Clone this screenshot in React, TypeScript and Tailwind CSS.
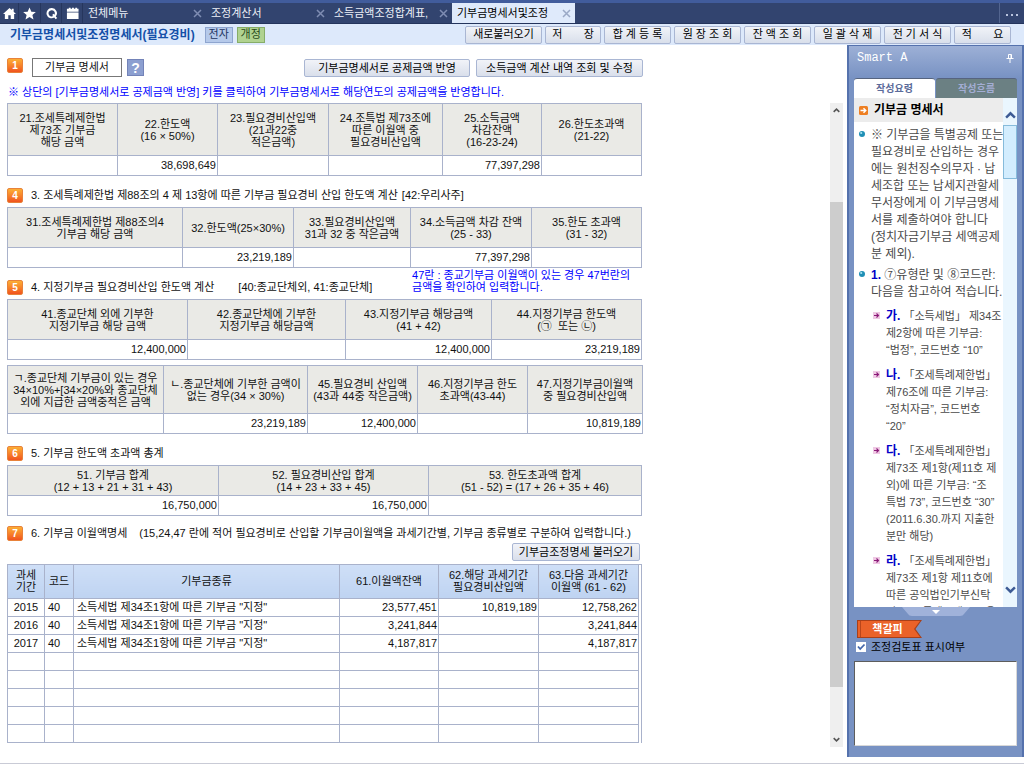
import React from "react";

type Col = { w: string; head: string[]; value?: string };

const limitCols: Col[] = [
  { w: "w-[110px]", head: ["21.조세특례제한법", "제73조 기부금", "해당 금액"] },
  { w: "w-[100px]", head: ["22.한도액", "(16 × 50%)"], value: "38,698,649" },
  { w: "w-[111px]", head: ["23.필요경비산입액", "(21과22중", "적은금액)"] },
  { w: "w-[114px]", head: ["24.조특법 제73조에", "따른 이월액 중", "필요경비산입액"] },
  { w: "w-[99px]", head: ["25.소득금액", "차감잔액", "(16-23-24)"], value: "77,397,298" },
  { w: "w-[100px]", head: ["26.한도초과액", "(21-22)"] },
];

const stockCols: Col[] = [
  { w: "w-[175px]", head: ["31.조세특례제한법 제88조의4", "기부금 해당 금액"] },
  { w: "w-[111px]", head: ["32.한도액(25×30%)"], value: "23,219,189" },
  { w: "w-[117px]", head: ["33.필요경비산입액", "31과 32 중 작은금액"] },
  { w: "w-[121px]", head: ["34.소득금액 차감 잔액", "(25 - 33)"], value: "77,397,298" },
  { w: "w-[110px]", head: ["35.한도 초과액", "(31 - 32)"] },
];

const designatedCols: Col[] = [
  { w: "w-[180px]", head: ["41.종교단체 외에 기부한", "지정기부금 해당 금액"], value: "12,400,000" },
  { w: "w-[158px]", head: ["42.종교단체에 기부한", "지정기부금 해당금액"] },
  { w: "w-[146px]", head: ["43.지정기부금 해당금액", "(41 + 42)"], value: "12,400,000" },
  { w: "w-[150px]", head: ["44.지정기부금 한도액", "(㉠  또는 ㉡)"], value: "23,219,189" },
];

const religiousCols: Col[] = [
  { w: "w-[156px]", head: ["ㄱ.종교단체 기부금이 있는 경우", "34×10%+[34×20%와 종교단체", "외에 지급한 금액중적은 금액"] },
  { w: "w-[144px]", head: ["ㄴ.종교단체에 기부한 금액이", "없는 경우(34 × 30%)"], value: "23,219,189" },
  { w: "w-[110px]", head: ["45.필요경비 산입액", "(43과 44중 작은금액)"], value: "12,400,000" },
  { w: "w-[110px]", head: ["46.지정기부금 한도", "초과액(43-44)"] },
  { w: "w-[115px]", head: ["47.지정기부금이월액", "중 필요경비산입액"], value: "10,819,189" },
];

const totalCols: Col[] = [
  { w: "w-[211px]", head: ["51. 기부금 합계", "(12 + 13 + 21 + 31 + 43)"], value: "16,750,000" },
  { w: "w-[210px]", head: ["52. 필요경비산입 합계", "(14 + 23 + 33 + 45)"], value: "16,750,000" },
  { w: "w-[213px]", head: ["53. 한도초과액 합계", "(51 - 52) = (17 + 26 + 35 + 46)"] },
];

const carryCols: Col[] = [
  { w: "w-[37px]", head: ["과세", "기간"] },
  { w: "w-[29px]", head: ["코드"] },
  { w: "w-[266px]", head: ["기부금종류"] },
  { w: "w-[99px]", head: ["61.이월액잔액"] },
  { w: "w-[100px]", head: ["62.해당 과세기간", "필요경비산입액"] },
  { w: "w-[100px]", head: ["63.다음 과세기간", "이월액 (61 - 62)"] },
];

const kind = '소득세법 제34조1항에 따른 기부금 "지정"';
const carryRows: string[][] = [
  ["2015", "40", kind, "23,577,451", "10,819,189", "12,758,262"],
  ["2016", "40", kind, "3,241,844", "", "3,241,844"],
  ["2017", "40", kind, "4,187,817", "", "4,187,817"],
  ["", "", "", "", "", ""],
  ["", "", "", "", "", ""],
  ["", "", "", "", "", ""],
  ["", "", "", "", "", ""],
  ["", "", "", "", "", ""],
];
const carryAlign = ["text-center", "pl-[3px]", "pl-[3px]", "pr-px text-right", "pr-px text-right", "pr-px text-right"];

function Lines({ lines }: { lines: string[] }) {
  return (
    <>
      {lines.map((line, i) => (
        <span key={i} className="block">
          {line}
        </span>
      ))}
    </>
  );
}

function AmountTable({ cols, headHeight }: { cols: Col[]; headHeight: string }) {
  return (
    <table className="w-full table-fixed border-collapse">
      <thead>
        <tr className={headHeight}>
          {cols.map((c, i) => (
            <th key={i} className={`${c.w} border border-[#a9b2cb] bg-[#eaeae6] p-0 text-center align-middle font-normal leading-[12px] whitespace-pre`}>
              <Lines lines={c.head} />
            </th>
          ))}
        </tr>
      </thead>
      <tbody>
        <tr className="h-[20px]">
          {cols.map((c, i) => (
            <td key={i} className="border border-[#a9b2cb] pt-0 pr-px pb-[2px] pl-0 text-right leading-[16px]">
              {c.value}
            </td>
          ))}
        </tr>
      </tbody>
    </table>
  );
}

function Badge({ n }: { n: string }) {
  return (
    <span className="flex h-[15px] w-[16px] shrink-0 items-center justify-center rounded-[2px] border border-[#e8823a] bg-linear-to-b from-[#fbae35] to-[#f0521f] text-[10px] font-bold leading-none text-white">
      {n}
    </span>
  );
}

function Heading({ n, title, note, noteGap, height = "h-[31px]", children }: {
  n: string;
  title: string;
  note?: string;
  noteGap?: string;
  height?: string;
  children?: React.ReactNode;
}) {
  return (
    <div className={`flex items-stretch ${height}`}>
      <h2 className="flex items-center pt-2 whitespace-nowrap">
        <Badge n={n} />
        <span className="ml-2">{title}</span>
        {note && <span className={noteGap}>{note}</span>}
      </h2>
      {children}
    </div>
  );
}

function PushButton({ children, className = "" }: { children: React.ReactNode; className?: string }) {
  return (
    <button
      type="button"
      className={`flex h-[18px] items-center justify-center rounded-[2px] border border-[#a9b6d3] bg-linear-to-b from-[#f1f3f8] to-[#d9dfeb] leading-none whitespace-pre text-black ${className}`}
    >
      {children}
    </button>
  );
}

function CloseMark({ color }: { color: string }) {
  return (
    <svg width="9" height="9" viewBox="0 0 9 9" fill="none" stroke={color} strokeWidth="1.5">
      <path d="M1 1l7 7M8 1l-7 7" />
    </svg>
  );
}

function Chevron({ dir, color, size }: { dir: "up" | "down"; color: string; size: number }) {
  return (
    <svg width={size} height={size} viewBox="0 0 10 10" fill="none" stroke={color} strokeWidth="2.2">
      <path d={dir === "up" ? "M1 7l4-4 4 4" : "M1 3l4 4 4-4"} />
    </svg>
  );
}

const tabs = ["전체메뉴", "조정계산서", "소득금액조정합계표,", "기부금명세서및조정"];

const navIcons = [
  { name: "home", w: "w-[19px]", d: "M7 1L0 7.500h2V13h3.700V9h2.600v4H12V7.500h2L11.500 5V2h-2v1.300z" },
  { name: "star", w: "w-[22px]", d: "M7 .5l2 4.500 4.800.4-3.700 3.200 1.200 4.900L7 10.900 2.700 13.500l1.200-4.900L.2 5.400 5 5z" },
  { name: "find", w: "w-[21px]", d: "M7 1.200a5.500 5.500 0 1 0 3 10.200l1.500 1.800 1.600-1.300-1.500-1.700A5.500 5.500 0 0 0 7 1.200zm0 2.200a3.400 3.400 0 0 1 3.200 4.900L9.200 7.200 7.700 8.500l1.100 1.300A3.400 3.400 0 1 1 7 3.400z" },
  { name: "calendar", w: "w-[21px]", d: "M1 2h2V.7h2V2h1.500V.7h2V2H10V.7h2V2h1.500v3H1zM1 6h12.500v7H1z" },
];

const actions = [
  { label: "새로불러오기", w: "w-[77px]" },
  { label: "저       장", w: "w-[56px]" },
  { label: "합 계 등 록", w: "w-[67px]" },
  { label: "원 장 조 회", w: "w-[67px]" },
  { label: "잔 액 조 회", w: "w-[67px]" },
  { label: "일 괄 삭 제", w: "w-[67px]" },
  { label: "전 기 서 식", w: "w-[67px]" },
  { label: "적       요", w: "w-[57px]" },
];

function Bullet() {
  return (
    <svg width="6" height="6" viewBox="0 0 6 6" className="mt-[4px] shrink-0">
      <circle cx="3" cy="3" r="3" fill="#1f8fb5" />
      <circle cx="2.200" cy="2" r="1.100" fill="#a8e4f2" />
    </svg>
  );
}

function ArrowBullet() {
  return (
    <svg width="7" height="7" viewBox="0 0 7 7" className="mt-[4px] shrink-0">
      <rect width="7" height="7" fill="#efc9e4" />
      <path d="M1 3.500h4M3.500 1.500l2 2-2 2" fill="none" stroke="#8b1a78" strokeWidth="1.100" />
    </svg>
  );
}

const clauses = [
  { mark: "가.", first: "「소득세법」 제34조", rest: ["제2항에 따른 기부금:", "“법정”, 코드번호 “10”"] },
  { mark: "나.", first: "「조세특례제한법」", rest: ["제76조에 따른 기부금:", "“정치자금”, 코드번호", "“20”"] },
  { mark: "다.", first: "「조세특례제한법」", rest: ["제73조 제1항(제11호 제", "외)에 따른 기부금: “조", "특법 73”, 코드번호 “30”", "(2011.6.30.까지 지출한", "분만 해당)"] },
  { mark: "라.", first: "「조세특례제한법」", rest: ["제73조 제1항 제11호에", "따른 공익법인기부신탁", "기부금: 특례금액 “31”을"] },
];

function SidePanel() {
  return (
    <aside className="flex w-[177px] shrink-0 flex-col border-x-2 border-t border-[#5572ad] bg-[#7892c3] px-[5px] pb-[11px]">
      <header className="-mx-[5px] flex h-[32px] items-start justify-between bg-linear-to-b from-[#9db0d6] to-[#7892c3] px-2 pt-1">
        <h2 className="font-['Liberation_Mono',monospace] text-[12px] leading-[16px] text-white">Smart A</h2>
        <svg width="8" height="9" viewBox="0 0 8 9" fill="none" stroke="#fff" className="mt-[4px]">
          <path d="M2.500 4.500v-4h3v4M.5 4.500h7M4 5v4M5 1v3" />
        </svg>
      </header>
      <div role="tablist" className="flex h-[20px] gap-px text-[10px] font-bold">
        <button type="button" role="tab" aria-selected="true" className="flex-1 rounded-t-[3px] border-t border-[#56647f] bg-white leading-none text-[#5b6b9a]">
          작성요령
        </button>
        <button type="button" role="tab" aria-selected="false" className="flex-1 rounded-t-[3px] border-t border-[#56647f] bg-[#6b8083] leading-none text-[#a3add4]">
          작성흐름
        </button>
      </div>
      <div className="flex h-[509px] overflow-hidden bg-white">
        <article className="min-w-0 flex-1 overflow-hidden text-[#4a4a4a]">
          <h3 className="flex h-[24px] items-center gap-[6px] bg-[#ececec] pl-[5px] text-[12px] font-bold text-black">
            <svg width="9" height="9" viewBox="0 0 9 9">
              <rect width="9" height="9" rx="1.500" fill="#ee7f22" />
              <path d="M1.500 4.500h5M4.500 2.200l2.300 2.300-2.300 2.300" fill="none" stroke="#fff" strokeWidth="1.400" />
            </svg>
            기부금 명세서
          </h3>
          <div className="pt-[5px] pl-[5px] leading-[17px] whitespace-nowrap">
            <div className="flex gap-[6px] text-[12px]">
              <Bullet />
              <p>
                <Lines lines={["※ 기부금을 특별공제 또는", "필요경비로 산입하는 경우", "에는 원천징수의무자 · 납", "세조합 또는 납세지관할세", "무서장에게 이 기부금명세", "서를 제출하여야 합니다", "(정치자금기부금 세액공제", "분 제외)."]} />
              </p>
            </div>
            <div className="mt-1 flex gap-[6px] text-[12px]">
              <Bullet />
              <p>
                <span className="block">
                  <b className="text-[#0000c8]">1.</b> ⑦유형란 및 ⑧코드란:
                </span>
                <span className="block">다음을 참고하여 적습니다.</span>
              </p>
            </div>
            <ol className="mt-[7px] space-y-2 pl-[14px] text-[11px]">
              {clauses.map((c) => (
                <li key={c.mark} className="flex gap-[6px]">
                  <ArrowBullet />
                  <p>
                    <span className="block">
                      <b className="text-[12px] text-[#0000c8]">{c.mark}</b> {c.first}
                    </span>
                    <Lines lines={c.rest} />
                  </p>
                </li>
              ))}
            </ol>
          </div>
        </article>
        <div className="flex w-[14px] shrink-0 flex-col items-center bg-[#eaf6fe]">
          <span className="flex h-[27px] items-center pt-[8px]">
            <Chevron dir="up" color="#3d5a94" size={11} />
          </span>
          <span className="h-[54px] w-full border border-[#86bbdb] bg-[#d3edfe]" />
          <span className="flex-1" />
          <span className="flex h-[23px] items-start">
            <Chevron dir="down" color="#3d5a94" size={11} />
          </span>
        </div>
      </div>
      <svg width="68" height="9" viewBox="0 0 68 9" className="self-center">
        <path d="M0 0h68l-6 7q-1 2-4 2H10q-3 0-4-2z" fill="#a0b2da" />
        <path d="M30 3h8l-4 4z" fill="#fff" />
      </svg>
      <button type="button" className="mt-[4px] ml-[3px] grid h-[18px] w-[65px] items-center">
        <svg width="65" height="18" viewBox="0 0 65 18" className="col-start-1 row-start-1">
          <path d="M0 0h65l-6.500 9L65 18H0z" fill="#a8401a" />
          <path d="M1 1h62l-6 8 6 8H1z" fill="#ea6229" />
          <path d="M3.500 1v16" stroke="#b9461b" />
        </svg>
        <span className="col-start-1 row-start-1 pr-1 text-[11px] font-bold leading-none text-white">책갈피</span>
      </button>
      <label className="flex h-[18px] items-center gap-[5px] pl-[2px] leading-none text-black">
        <span className="grid">
          <input type="checkbox" defaultChecked className="peer col-start-1 row-start-1 size-[10px] appearance-none bg-white" />
          <svg width="10" height="10" viewBox="0 0 10 10" className="pointer-events-none invisible col-start-1 row-start-1 peer-checked:visible">
            <path d="M2 4.500l2.200 2.500L8.500 2.500" fill="none" stroke="#4467ab" strokeWidth="1.800" />
          </svg>
        </span>
        조정검토표 표시여부
      </label>
      <textarea aria-label="책갈피" className="mt-[5px] min-h-[85px] w-full flex-1 resize-none border border-t-[#5d5d5d] border-r-[#d8d8d8] border-b-[#d8d8d8] border-l-[#5d5d5d] bg-white" />
    </aside>
  );
}

export default function App() {
  return (
    <div className="flex min-h-screen flex-col bg-white font-['Liberation_Sans','Noto_Sans_CJK_KR',sans-serif] text-[11px] text-[#111]">
      <nav className="flex h-[24px] border-t-[3px] border-b border-t-[#415c9c] border-b-[#24345c] bg-[#32446f]">
        {navIcons.map((icon) => (
          <button key={icon.name} type="button" aria-label={icon.name} className={`flex shrink-0 items-center justify-center border-r border-[#26365d] ${icon.w}`}>
            <svg width="13" height="13" viewBox="0 0 14 14" fill="#fff" fillRule="evenodd">
              <path d={icon.d} />
            </svg>
          </button>
        ))}
        {tabs.map((tab, i) => (
          <a
            key={tab}
            href="#"
            className={`flex w-[123px] shrink items-center justify-between pr-[4px] pl-[5px] whitespace-nowrap ${i === 3 ? "bg-[#dfeafb] text-black" : "text-[#eef1f8]"}`}
          >
            {tab}
            <CloseMark color={i === 3 ? "#9aa9c6" : "#7f8db3"} />
          </a>
        ))}
        <button type="button" aria-label="more" className="ml-auto flex w-[25px] items-center justify-center border-l border-[#53658f]">
          <svg width="12" height="2" viewBox="0 0 12 2" fill="#b9c4de" className="mt-1">
            <path d="M0 0h2v2H0zM5 0h2v2H5zM10 0h2v2h-2z" />
          </svg>
        </button>
      </nav>

      <header className="flex h-[21px] items-center bg-[#dde9fb] pr-[13px] pl-[10px]">
        <h1 className="text-[12px] font-bold leading-none whitespace-nowrap text-[#1450a8]">기부금명세서및조정명세서(필요경비)</h1>
        <span className="ml-[10px] flex h-[16px] w-[28px] items-center justify-center border border-[#8ea5cf] bg-[#b5c9ea] text-[#1d3460]">전자</span>
        <span className="ml-1 flex h-[16px] w-[28px] items-center justify-center border border-[#86ad68] bg-[#b0d290] text-[#27491a]">개정</span>
        <div className="ml-auto flex gap-[3px]">
          {actions.map((a) => (
            <PushButton key={a.label} className={a.w}>
              {a.label}
            </PushButton>
          ))}
        </div>
      </header>

      <div className="flex flex-1">
        <main className="flex min-w-0 flex-1 flex-col pr-[4px] pb-[10px]">
          <div className="max-w-[643px] pl-[7px]">
            <div className="flex h-[39px] items-start pt-[13px]">
              <Badge n="1" />
              <span className="ml-[9px] flex h-[19px] w-[90px] items-center justify-center border border-[#777] bg-white">기부금 명세서</span>
              <button type="button" className="mt-px ml-[5px] flex size-[17px] items-center justify-center border border-[#7383b8] bg-[#8c9fd0] text-[14px] font-bold leading-none text-white">
                ?
              </button>
              <PushButton className="mt-px ml-auto w-[166px]">기부금명세서로 공제금액 반영</PushButton>
              <PushButton className="mt-px ml-[6px] w-[167px]">소득금액 계산 내역 조회 및 수정</PushButton>
            </div>
            <p className="h-[19px] pl-px leading-[17px] text-[#0000ff]">
              ※ 상단의 [기부금명세서로 공제금액 반영] 키를 클릭하여 기부금명세서로 해당연도의 공제금액을 반영합니다.
            </p>
          </div>

          <div className="flex flex-1 justify-between">
            <div className="w-full max-w-[642px] pl-[7px]">
              <AmountTable cols={limitCols} headHeight="h-[52px]" />

              <Heading n="4" title="3. 조세특례제한법 제88조의 4 제 13항에 따른 기부금 필요경비 산입 한도액 계산" note="[42:우리사주]" noteGap="ml-1" />
              <AmountTable cols={stockCols} headHeight="h-[40px]" />

              <Heading n="5" title="4. 지정기부금 필요경비산입 한도액 계산" note="[40:종교단체외, 41:종교단체]" noteGap="ml-6">
                <p className="ml-auto pt-px pr-[12px] leading-[12px] whitespace-nowrap text-[#0000ff]">
                  <Lines lines={["47란 : 종교기부금 이월액이 있는 경우 47번란의", "금액을 확인하여 입력합니다."]} />
                </p>
              </Heading>
              <AmountTable cols={designatedCols} headHeight="h-[40px]" />
              <div className="h-[5px]" />
              <AmountTable cols={religiousCols} headHeight="h-[48px]" />

              <Heading n="6" title="5. 기부금 한도액 초과액 총계" />
              <AmountTable cols={totalCols} headHeight="h-[30px]" />

              <Heading n="7" title="6. 기부금 이월액명세" note="(15,24,47 란에 적어 필요경비로 산입할 기부금이월액을 과세기간별, 기부금 종류별로 구분하여 입력합니다.)" noteGap="ml-3" height="h-[27px]" />
              <div className="flex h-[21px] items-start justify-end pr-[2px]">
                <PushButton className="w-[128px]">기부금조정명세 불러오기</PushButton>
              </div>
              <div className="border-t border-r border-[#a9b2cb] pr-[2px]">
                <table className="w-full table-fixed border-collapse">
                  <thead>
                    <tr className="h-[33px]">
                      {carryCols.map((c, i) => (
                        <th key={i} className={`${c.w} border border-t-0 border-[#a9b2cb] bg-linear-to-b from-[#cfdff7] to-[#bed3f1] p-0 text-center align-middle font-normal leading-[12px]`}>
                          <Lines lines={c.head} />
                        </th>
                      ))}
                    </tr>
                  </thead>
                  <tbody>
                    {carryRows.map((row, r) => (
                      <tr key={r} className="h-[18px]">
                        {row.map((cell, i) => (
                          <td key={i} className={`border border-[#a9b2cb] py-0 leading-[16px] whitespace-nowrap ${carryAlign[i]}`}>
                            {cell}
                          </td>
                        ))}
                      </tr>
                    ))}
                  </tbody>
                </table>
              </div>
            </div>

            <div className="flex w-[13px] shrink-0 flex-col items-center bg-[#efefef]">
              <span className="flex h-[15px] items-center">
                <Chevron dir="up" color="#555" size={7} />
              </span>
              <span className="flex-[84]" />
              <span className="w-full flex-[485] bg-[#cdcdcd]" />
              <span className="flex-[45]" />
              <span className="flex h-[15px] items-center">
                <Chevron dir="down" color="#555" size={7} />
              </span>
            </div>
          </div>
        </main>
        <SidePanel />
      </div>
      <footer className="h-[7px] shrink-0 border-b border-[#c9cbd6]" />
    </div>
  );
}
